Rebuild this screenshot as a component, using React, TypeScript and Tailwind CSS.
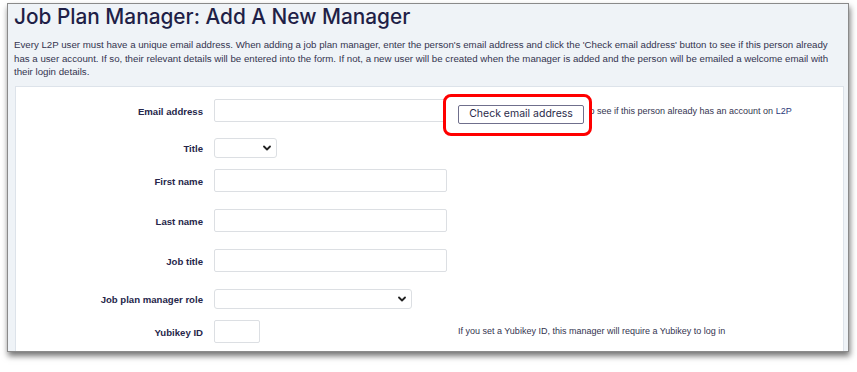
import React from "react";

function Chevron({ className }: { className?: string }) {
  return (
    <svg className={className} width="8" height="6" viewBox="0 0 8 6" fill="none">
      <path d="M1 1.5 L4 4.5 L7 1.5" stroke="#222" strokeWidth="1.8" strokeLinecap="round" strokeLinejoin="round" />
    </svg>
  );
}

function Label({ children }: { children: React.ReactNode }) {
  return (
    <div className="text-right text-[9.6px] font-bold text-[#26264a] leading-[13px] pt-[2px]">{children}</div>
  );
}

function TextInput({ w }: { w: string }) {
  return <div className={`${w} h-[23px] bg-white border border-[#dcdfe3] rounded-[2px]`} />;
}

export default function App() {
  const rowGrid = "grid grid-cols-[187px_233px_1fr] gap-x-[11px] items-center";
  return (
    <div className="w-[857px] h-[372px] bg-white overflow-hidden" style={{ fontFamily: '"Liberation Sans", Arial, sans-serif' }}>
      <div className="ml-[7px] mt-[3px] w-[842px] h-[349px] border border-[#8a8a8a] bg-[#eff3f7] overflow-hidden shadow-[1px_4px_6px_rgba(0,0,0,0.55)]">
        <div className="pl-[6px] pr-[4px]">
          <h1
            className="pt-[0px] text-[20.8px] leading-[26px] font-medium text-[#1f1f47]"
            style={{ fontFamily: 'Inter, "Open Sans", sans-serif' }}
          >
            Job Plan Manager: Add A New Manager
          </h1>
          <p className="mt-[8px] text-[9.7px] leading-[13.5px] text-[#34344f] pr-[14px]">
            Every L2P user must have a unique email address. When adding a job plan manager, enter the person's email address and click the 'Check email address' button to see if this person already has a user account. If so, their relevant details will be entered into the form. If not, a new user will be created when the manager is added and the person will be emailed a welcome email with their login details.
          </p>
          <div className="mt-[7px] ml-[1px] bg-white border border-[#dde3ea] h-[300px] pt-[12px]">
            {/* Email */}
            <div className={rowGrid}>
              <Label>Email address</Label>
              <TextInput w="w-[233px]" />
              <div className="relative flex items-center h-[23px]">
                <div className="absolute left-[-15px] top-[-5px] w-[149px] h-[42px] border-[3px] border-[#ff0000] rounded-[8px] bg-white z-10" />
                <button className="relative z-20 w-[126px] h-[19px] mt-[8px] border border-[#6f6f8c] rounded-[2px] bg-white text-[10.5px] text-[#2a2a4a] leading-none" style={{ fontFamily: 'Inter, "Open Sans", sans-serif' }}>
                  Check email address
                </button>
                <span className="ml-[3px] mt-[4px] text-[9px] text-[#34344f] whitespace-nowrap">to see if this person already has an account on <span className="text-[#2b3a7a]">L2P</span></span>
              </div>
            </div>
            {/* Title */}
            <div className={`${rowGrid} mt-[16px]`}>
              <Label>Title</Label>
              <div className="w-[63px] h-[20px] bg-white border border-[#dcdfe3] rounded-[3px] flex items-center justify-end pr-[5px]">
                <Chevron />
              </div>
              <div />
            </div>
            {/* First name */}
            <div className={`${rowGrid} mt-[11px]`}>
              <Label>First name</Label>
              <TextInput w="w-[233px]" />
              <div />
            </div>
            {/* Last name */}
            <div className={`${rowGrid} mt-[17px]`}>
              <Label>Last name</Label>
              <TextInput w="w-[233px]" />
              <div />
            </div>
            {/* Job title */}
            <div className={`${rowGrid} mt-[17px]`}>
              <Label>Job title</Label>
              <TextInput w="w-[233px]" />
              <div />
            </div>
            {/* Role */}
            <div className={`${rowGrid} mt-[17px]`}>
              <Label>Job plan manager role</Label>
              <div className="w-[198px] h-[20px] bg-white border border-[#dcdfe3] rounded-[3px] flex items-center justify-end pr-[5px]">
                <Chevron />
              </div>
              <div />
            </div>
            {/* Yubikey */}
            <div className={`${rowGrid} mt-[11px]`}>
              <Label>Yubikey ID</Label>
              <TextInput w="w-[46px]" />
              <div className="text-[9px] text-[#34344f] whitespace-nowrap pt-[2px]">If you set a Yubikey ID, this manager will require a Yubikey to log in</div>
            </div>
          </div>
        </div>
      </div>
    </div>
  );
}
